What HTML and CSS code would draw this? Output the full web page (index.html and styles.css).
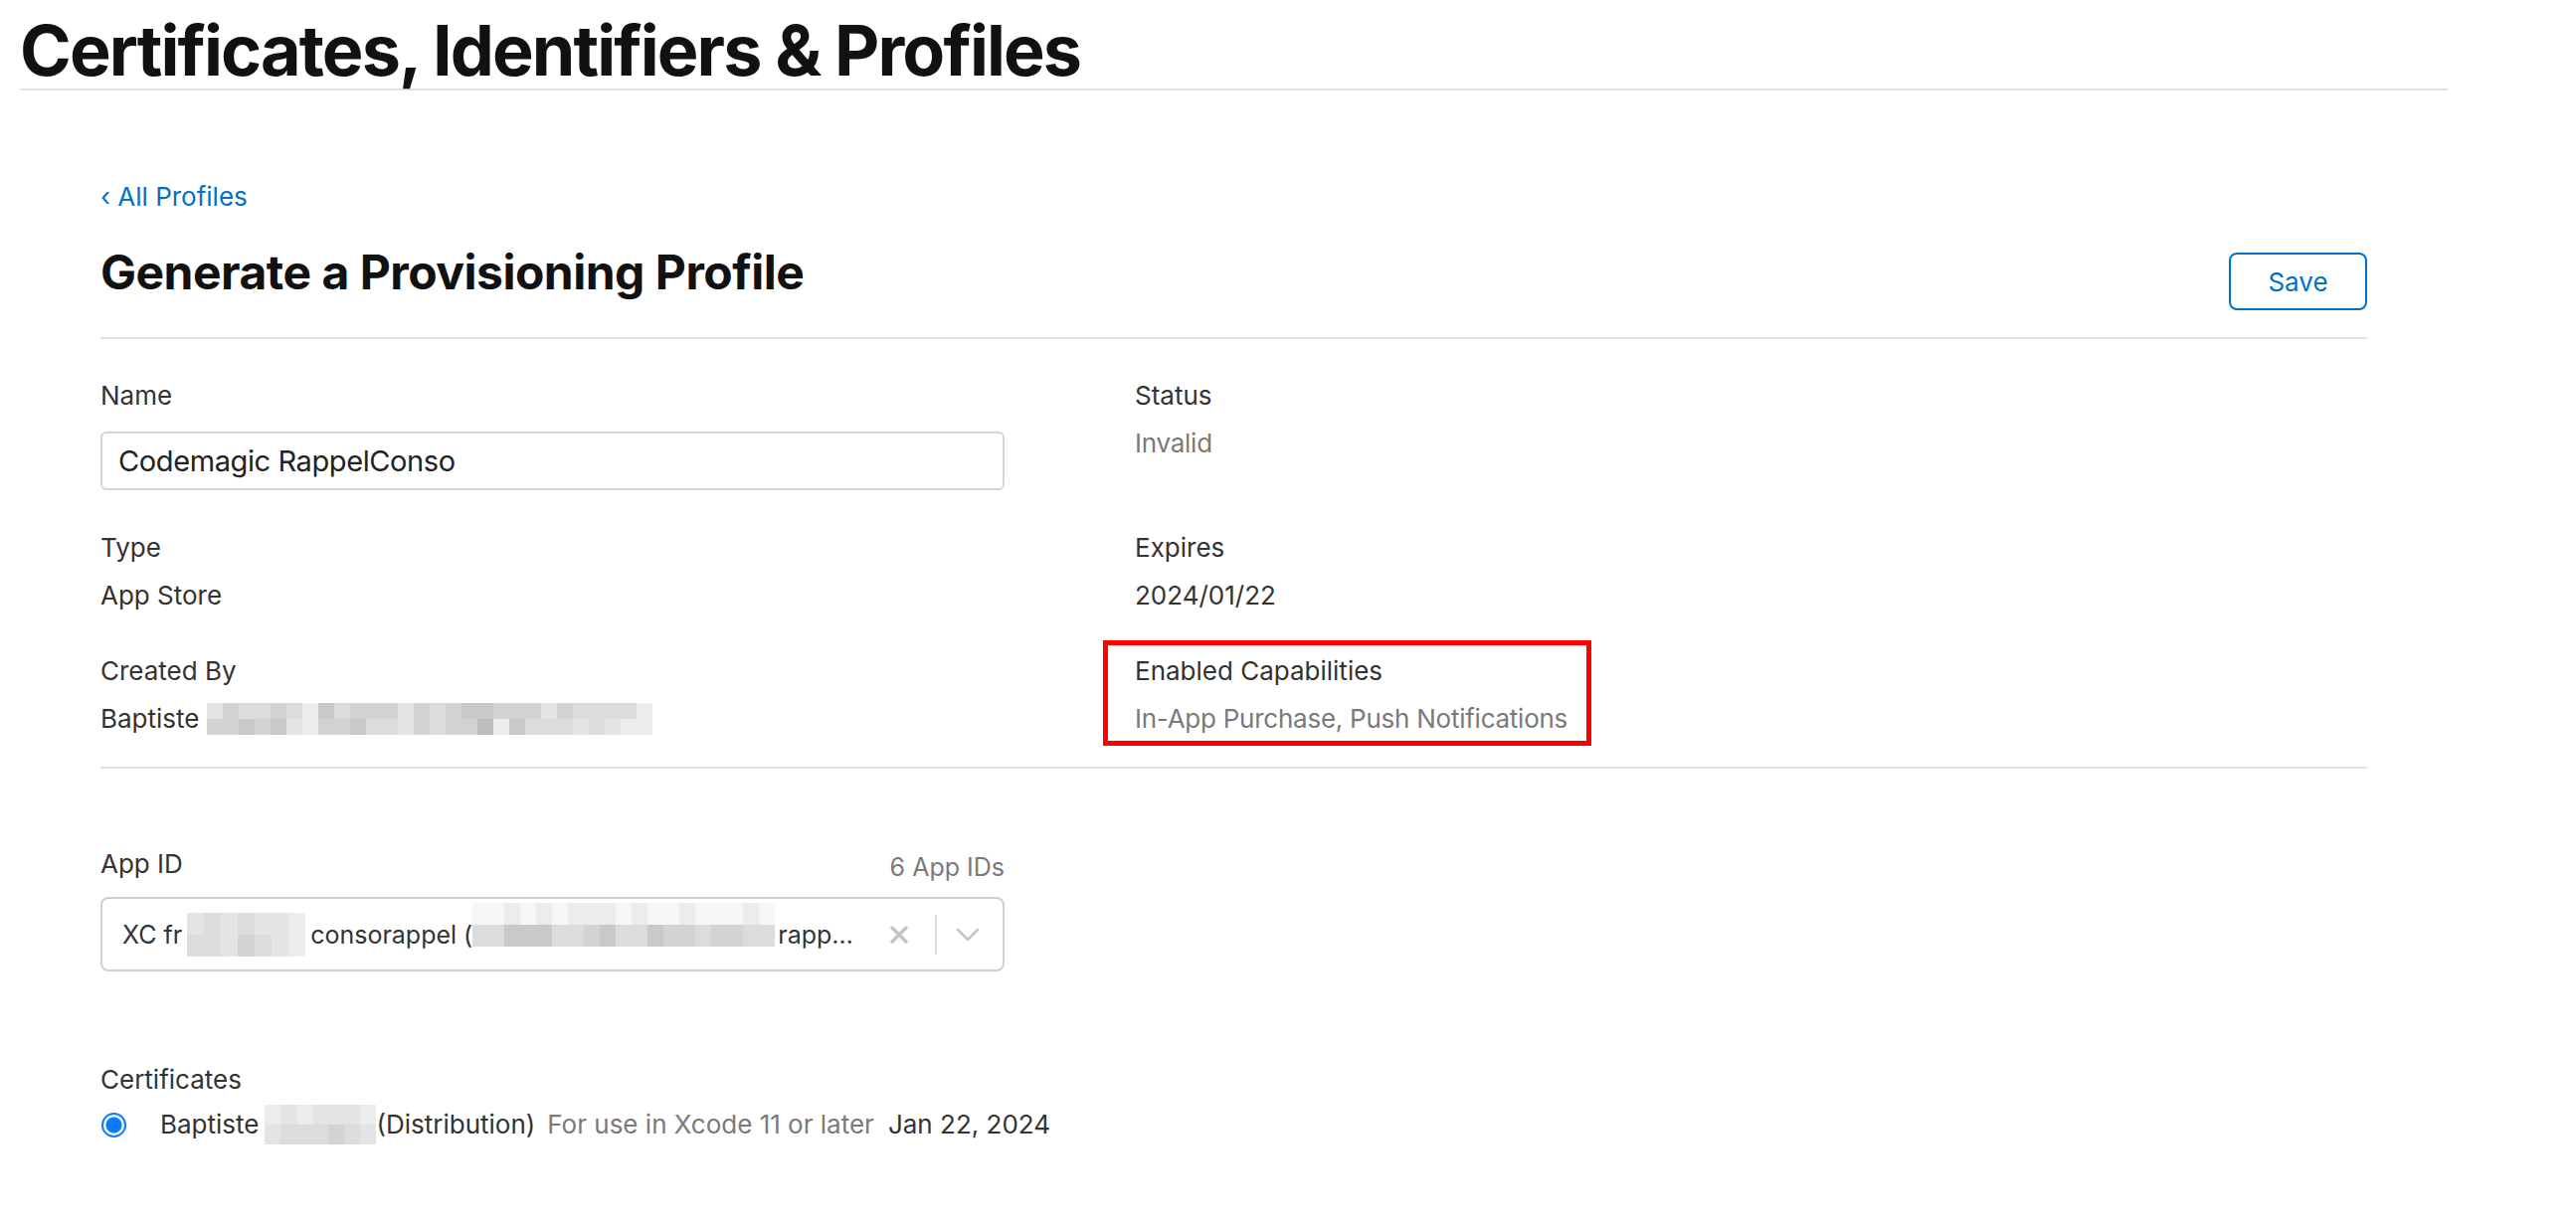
FILE: index.html
```html
<!DOCTYPE html>
<html>
<head>
    <meta charset="UTF-8">
    <meta content="width=device-width, initial-scale=1.0" name="viewport"/>
    <title>Certificates, Identifiers &amp; Profiles</title>
    <link rel="stylesheet" href="styles.css">
</head>
<body>
    <header class="page-header">
        <h1>Certificates, Identifiers &amp; Profiles</h1>
    </header>
    <main class="content">
        <a class="back-link" href="#">&lsaquo; All Profiles</a>
        <div class="title-row">
            <h2>Generate a Provisioning Profile</h2>
            <button class="btn-save" type="button">Save</button>
        </div>

        <div class="details">
            <div class="field">
                <div class="field-label">Name</div>
                <input class="text-input" type="text" value="Codemagic RappelConso">
            </div>
            <div class="field">
                <div class="field-label">Status</div>
                <div class="field-value muted">Invalid</div>
            </div>
            <div class="field">
                <div class="field-label">Type</div>
                <div class="field-value">App Store</div>
            </div>
            <div class="field">
                <div class="field-label">Expires</div>
                <div class="field-value">2024/01/22</div>
            </div>
            <div class="field">
                <div class="field-label">Created By</div>
                <div class="field-value inline-row">
                    <span>Baptiste</span>
                    <span class="mosaic mosaic-creator">
                        <span class="e"></span><span class="c"></span><span class="d"></span><span class="d"></span><span class="c"></span><span class="d"></span><span class="f"></span><span class="b"></span><span class="d"></span><span class="c"></span><span class="c"></span><span class="c"></span><span class="e"></span><span class="c"></span><span class="d"></span><span class="c"></span><span class="b"></span><span class="b"></span><span class="c"></span><span class="c"></span><span class="c"></span><span class="e"></span><span class="c"></span><span class="d"></span><span class="d"></span><span class="d"></span><span class="d"></span><span class="f"></span>
                        <span class="c"></span><span class="c"></span><span class="b"></span><span class="c"></span><span class="b"></span><span class="e"></span><span class="f"></span><span class="c"></span><span class="c"></span><span class="b"></span><span class="d"></span><span class="d"></span><span class="e"></span><span class="c"></span><span class="d"></span><span class="c"></span><span class="c"></span><span class="a"></span><span class="f"></span><span class="b"></span><span class="d"></span><span class="d"></span><span class="d"></span><span class="e"></span><span class="d"></span><span class="e"></span><span class="f"></span><span class="f"></span>
                    </span>
                </div>
            </div>
            <div class="field highlighted">
                <div class="field-label">Enabled Capabilities</div>
                <div class="field-value muted">In-App Purchase, Push Notifications</div>
            </div>
        </div>

        <div class="app-id">
            <div class="app-id-head">
                <div class="field-label">App ID</div>
                <div class="count">6 App IDs</div>
            </div>
            <div class="select-box">
                <div class="select-value">
                    <span>XC fr</span>
                    <span class="mosaic mosaic-xc">
                        <span class="e"></span><span class="d"></span><span class="e"></span><span class="d"></span><span class="e"></span><span class="e"></span><span class="f"></span>
                        <span class="d"></span><span class="d"></span><span class="e"></span><span class="c"></span><span class="d"></span><span class="e"></span><span class="f"></span>
                    </span>
                    <span>consorappel (</span>
                    <span class="mosaic mosaic-bundle">
                        <span class="g"></span><span class="g"></span><span class="f"></span><span class="g"></span><span class="f"></span><span class="g"></span><span class="f"></span><span class="f"></span><span class="f"></span><span class="g"></span><span class="f"></span><span class="g"></span><span class="g"></span><span class="f"></span><span class="g"></span><span class="g"></span><span class="g"></span><span class="f"></span><span class="g"></span>
                        <span class="d"></span><span class="d"></span><span class="b"></span><span class="b"></span><span class="b"></span><span class="d"></span><span class="d"></span><span class="c"></span><span class="b"></span><span class="d"></span><span class="d"></span><span class="b"></span><span class="c"></span><span class="c"></span><span class="d"></span><span class="c"></span><span class="c"></span><span class="d"></span><span class="d"></span>
                    </span>
                    <span>rapp&hellip;</span>
                </div>
                <div class="select-icons">
                    <svg class="icon-clear" width="20" height="20" viewBox="0 0 20 20"><path d="M3 3 L17 17 M17 3 L3 17" stroke="#c4c4c4" stroke-width="3.5" stroke-linecap="round" fill="none"/></svg>
                    <span class="select-sep"></span>
                    <svg class="icon-chevron" width="26" height="16" viewBox="0 0 26 16"><path d="M3 3 L13 13 L23 3" stroke="#c4c4c4" stroke-width="2.5" stroke-linecap="round" stroke-linejoin="round" fill="none"/></svg>
                </div>
            </div>
        </div>

        <div class="certificates">
            <div class="field-label">Certificates</div>
            <label class="cert-row">
                <span class="radio"></span>
                <span class="inline-row">
                    <span>Baptiste</span>
                    <span class="mosaic mosaic-cert">
                        <span class="f"></span><span class="e"></span><span class="f"></span><span class="e"></span><span class="e"></span><span class="e"></span><span class="f"></span>
                        <span class="e"></span><span class="d"></span><span class="d"></span><span class="d"></span><span class="c"></span><span class="d"></span><span class="e"></span>
                    </span>
                    <span>(Distribution)</span>
                </span>
                <span class="muted cert-note">For use in Xcode 11 or later</span>
                <span class="cert-date">Jan 22, 2024</span>
            </label>
        </div>
    </main>
</body>
</html>
```

FILE: styles.css
```css
html {
    background: #ffffff;
}
body {
    margin: 0;
    font-family: Inter, "Noto Sans", Arial, sans-serif;
    font-size: 26px;
    line-height: 36px;
    color: #333333;
}
.page-header {
    width: 2441px;
    margin-left: 20px;
    padding-top: 16px;
    padding-bottom: 3px;
    border-bottom: 2px solid #e2e2e2;
}
h1 {
    margin: 0;
    font-size: 70px;
    line-height: 70px;
    font-weight: 700;
    color: #111111;
    letter-spacing: -1.9px;
}
.content {
    margin-left: 101px;
    width: 2279px;
}
.back-link {
    display: inline-block;
    margin-top: 89px;
    color: #0070c9;
    text-decoration: none;
    font-size: 26px;
    line-height: 36px;
}
.title-row {
    display: flex;
    justify-content: space-between;
    align-items: flex-start;
    margin-top: 29px;
    padding-bottom: 27px;
    border-bottom: 2px solid #e2e2e2;
}
h2 {
    margin: 0;
    margin-top: 0;
    font-size: 48px;
    line-height: 58px;
    font-weight: 700;
    color: #111111;
    letter-spacing: -0.5px;
}
.btn-save {
    margin-top: 9px;
    width: 139px;
    height: 58px;
    border: 2px solid #0070c9;
    border-radius: 8px;
    background: #ffffff;
    color: #0070c9;
    font-family: inherit;
    font-size: 26px;
    cursor: pointer;
}
.details {
    display: grid;
    grid-template-columns: 909px 1fr;
    column-gap: 131px;
    row-gap: 40px;
    padding-top: 39px;
    padding-bottom: 30px;
    border-bottom: 2px solid #e2e2e2;
}
.field-label {
    color: #333333;
    margin-bottom: 12px;
}
.field-value {
    color: #333333;
}
.muted {
    color: #7a7a7a;
}
.field-value.muted {
    letter-spacing: -0.25px;
}
.text-input {
    display: block;
    box-sizing: border-box;
    width: 909px;
    height: 59px;
    margin-top: 18px;
    padding: 0 16px;
    border: 2px solid #d6d6d6;
    border-radius: 6px;
    font-family: inherit;
    font-size: 29px;
    letter-spacing: -0.4px;
    color: #222222;
}
.inline-row {
    display: flex;
    align-items: center;
}
.highlighted {
    position: relative;
}
/* red annotation frame drawn over the capabilities cell */
.highlighted::after {
    content: "";
    position: absolute;
    left: -32px;
    top: -13px;
    width: 481px;
    height: 96px;
    border: 5px solid #ff0000;
}
.mosaic {
    display: grid;
}
.mosaic .a { background: #bdbdbd; }
.mosaic .b { background: #c9c9c9; }
.mosaic .c { background: #d3d3d3; }
.mosaic .d { background: #dcdcdc; }
.mosaic .e { background: #e4e4e4; }
.mosaic .f { background: #ececec; }
.mosaic .g { background: #f6f6f6; }
.mosaic-creator {
    grid-template-columns: repeat(28, 16px);
    grid-auto-rows: 16px;
    margin-left: 8px;
}
.app-id {
    padding-top: 78px;
    width: 909px;
}
.app-id-head {
    display: flex;
    justify-content: space-between;
    align-items: baseline;
}
.app-id-head .field-label {
    margin-bottom: 15px;
}
.count {
    font-size: 25px;
    color: #7a7a7a;
    position: relative;
    top: 3px;
}
.select-box {
    box-sizing: border-box;
    height: 75px;
    display: flex;
    align-items: center;
    justify-content: space-between;
    border: 2px solid #cfcfcf;
    border-radius: 8px;
    padding: 0 22px 0 20px;
}
.select-value {
    display: flex;
    align-items: center;
    font-size: 25px;
    color: #333333;
}
.mosaic-xc {
    grid-template-columns: repeat(7, 17px);
    grid-auto-rows: 22px;
    margin: 0 5px;
}
.mosaic-bundle {
    grid-template-columns: repeat(19, 16px);
    grid-auto-rows: 22px;
    margin-bottom: 20px;
    margin-right: 3px;
}
.select-icons {
    display: flex;
    align-items: center;
}
.select-sep {
    width: 2px;
    height: 40px;
    background: #dddddd;
    margin: 0 18px 0 26px;
}
.certificates {
    margin-top: 91px;
}
.certificates .field-label {
    margin-bottom: 7px;
}
.cert-row {
    display: flex;
    align-items: center;
    font-size: 26px;
}
.radio {
    box-sizing: border-box;
    width: 25px;
    height: 25px;
    border-radius: 50%;
    border: 2px solid #0a7aff;
    background: radial-gradient(circle, #0a7aff 0 7.5px, #ffffff 8.5px);
    margin-left: 1px;
    margin-right: 34px;
}
.mosaic-cert {
    grid-template-columns: repeat(7, 16px);
    grid-auto-rows: 20px;
    margin-left: 6px;
}
.cert-note {
    margin-left: 12px;
}
.cert-date {
    margin-left: 14px;
}
```
